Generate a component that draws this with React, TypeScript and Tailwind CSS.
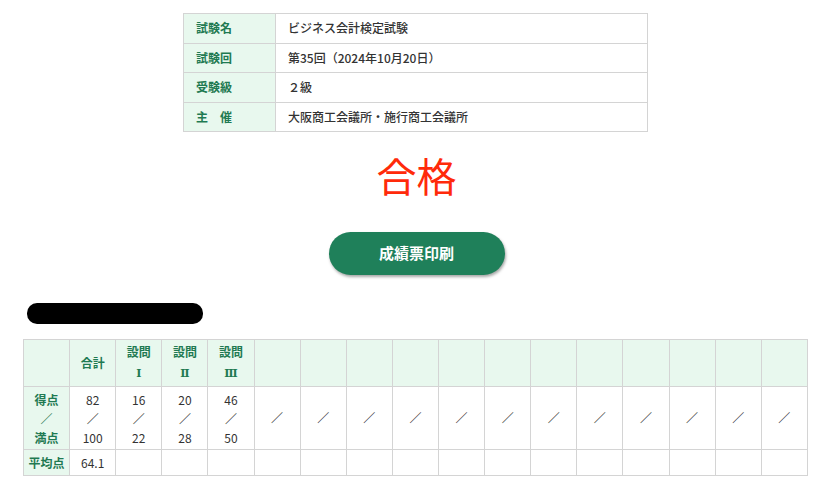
import React from "react";

const font = { fontFamily: '"Noto Sans CJK JP", "Noto Sans", sans-serif' };

const info = [
  { label: "試験名", value: "ビジネス会計検定試験" },
  { label: "試験回", value: "第35回（2024年10月20日）" },
  { label: "受験級", value: "２級" },
  { label: "主　催", value: "大阪商工会議所・施行商工会議所" },
];

const scores = [
  { head: ["合計"], score: "82", full: "100" },
  { head: ["設問", "Ⅰ"], score: "16", full: "22" },
  { head: ["設問", "Ⅱ"], score: "20", full: "28" },
  { head: ["設問", "Ⅲ"], score: "46", full: "50" },
];

const emptyCols = Array.from({ length: 12 }, (_, i) => i);

export default function App() {
  return (
    <div className="min-h-screen bg-white pt-[13px] text-[12px] text-[#333]" style={font}>
      {/* exam info */}
      <table className="ml-[183px] w-[465px] border-collapse border border-[#d4d4d4]">
        <tbody>
          {info.map((row) => (
            <tr key={row.label} className="h-[29.5px]">
              <th className="w-[92px] border border-[#d4d4d4] bg-[#e8f8ee] pl-[12px] text-left font-bold text-[#1f7a52]">
                {row.label}
              </th>
              <td className="border border-[#d4d4d4] pl-[12px] font-medium text-[#333]">{row.value}</td>
            </tr>
          ))}
        </tbody>
      </table>

      <div className="mt-[19px] text-center text-[40px] leading-[48px] text-[#ff2a0a]">合格</div>

      <div className="mt-[33px] flex justify-center">
        <button className="h-[43px] w-[176px] rounded-full bg-[#1f805a] text-[15px] font-bold text-white shadow-[1px_2px_3px_rgba(0,0,0,0.35)]">
          成績票印刷
        </button>
      </div>

      {/* redacted name */}
      <div className="ml-[27px] mt-[28px] h-[21px] w-[176px] rounded-[10px] bg-black" />

      {/* score table */}
      <table className="ml-[23px] mt-[15px] w-[785px] table-fixed border-collapse border border-[#d4d4d4] text-center">
        <thead>
          <tr className="h-[47px] bg-[#e8f8ee]">
            <th className="border border-[#d4d4d4]" />
            {scores.map((s, i) => (
              <th key={i} className="border border-[#d4d4d4] font-bold leading-[22px] text-[#1f7a52]">
                {s.head.map((h, j) => (
                  <div key={j} style={j === 1 ? { fontFamily: '"DejaVu Serif", "Liberation Serif", serif', fontSize: 11 } : undefined}>
                    {h}
                  </div>
                ))}
              </th>
            ))}
            {emptyCols.map((i) => (
              <th key={i} className="border border-[#d4d4d4]" />
            ))}
          </tr>
        </thead>
        <tbody>
          <tr className="h-[63px]">
            <th className="border border-[#d4d4d4] bg-[#e8f8ee] font-bold leading-[19px] text-[#1f7a52]">
              <div>得点</div>
              <div className="font-normal">／</div>
              <div>満点</div>
            </th>
            {scores.map((s, i) => (
              <td key={i} className="border border-[#d4d4d4] leading-[19px]">
                <div>{s.score}</div>
                <div>／</div>
                <div>{s.full}</div>
              </td>
            ))}
            {emptyCols.map((i) => (
              <td key={i} className="border border-[#d4d4d4] text-[#333]">
                ／
              </td>
            ))}
          </tr>
          <tr className="h-[26px]">
            <th className="border border-[#d4d4d4] bg-[#e8f8ee] font-bold text-[#1f7a52]">平均点</th>
            <td className="border border-[#d4d4d4]">64.1</td>
            {Array.from({ length: 15 }, (_, i) => (
              <td key={i} className="border border-[#d4d4d4]" />
            ))}
          </tr>
        </tbody>
      </table>
    </div>
  );
}
